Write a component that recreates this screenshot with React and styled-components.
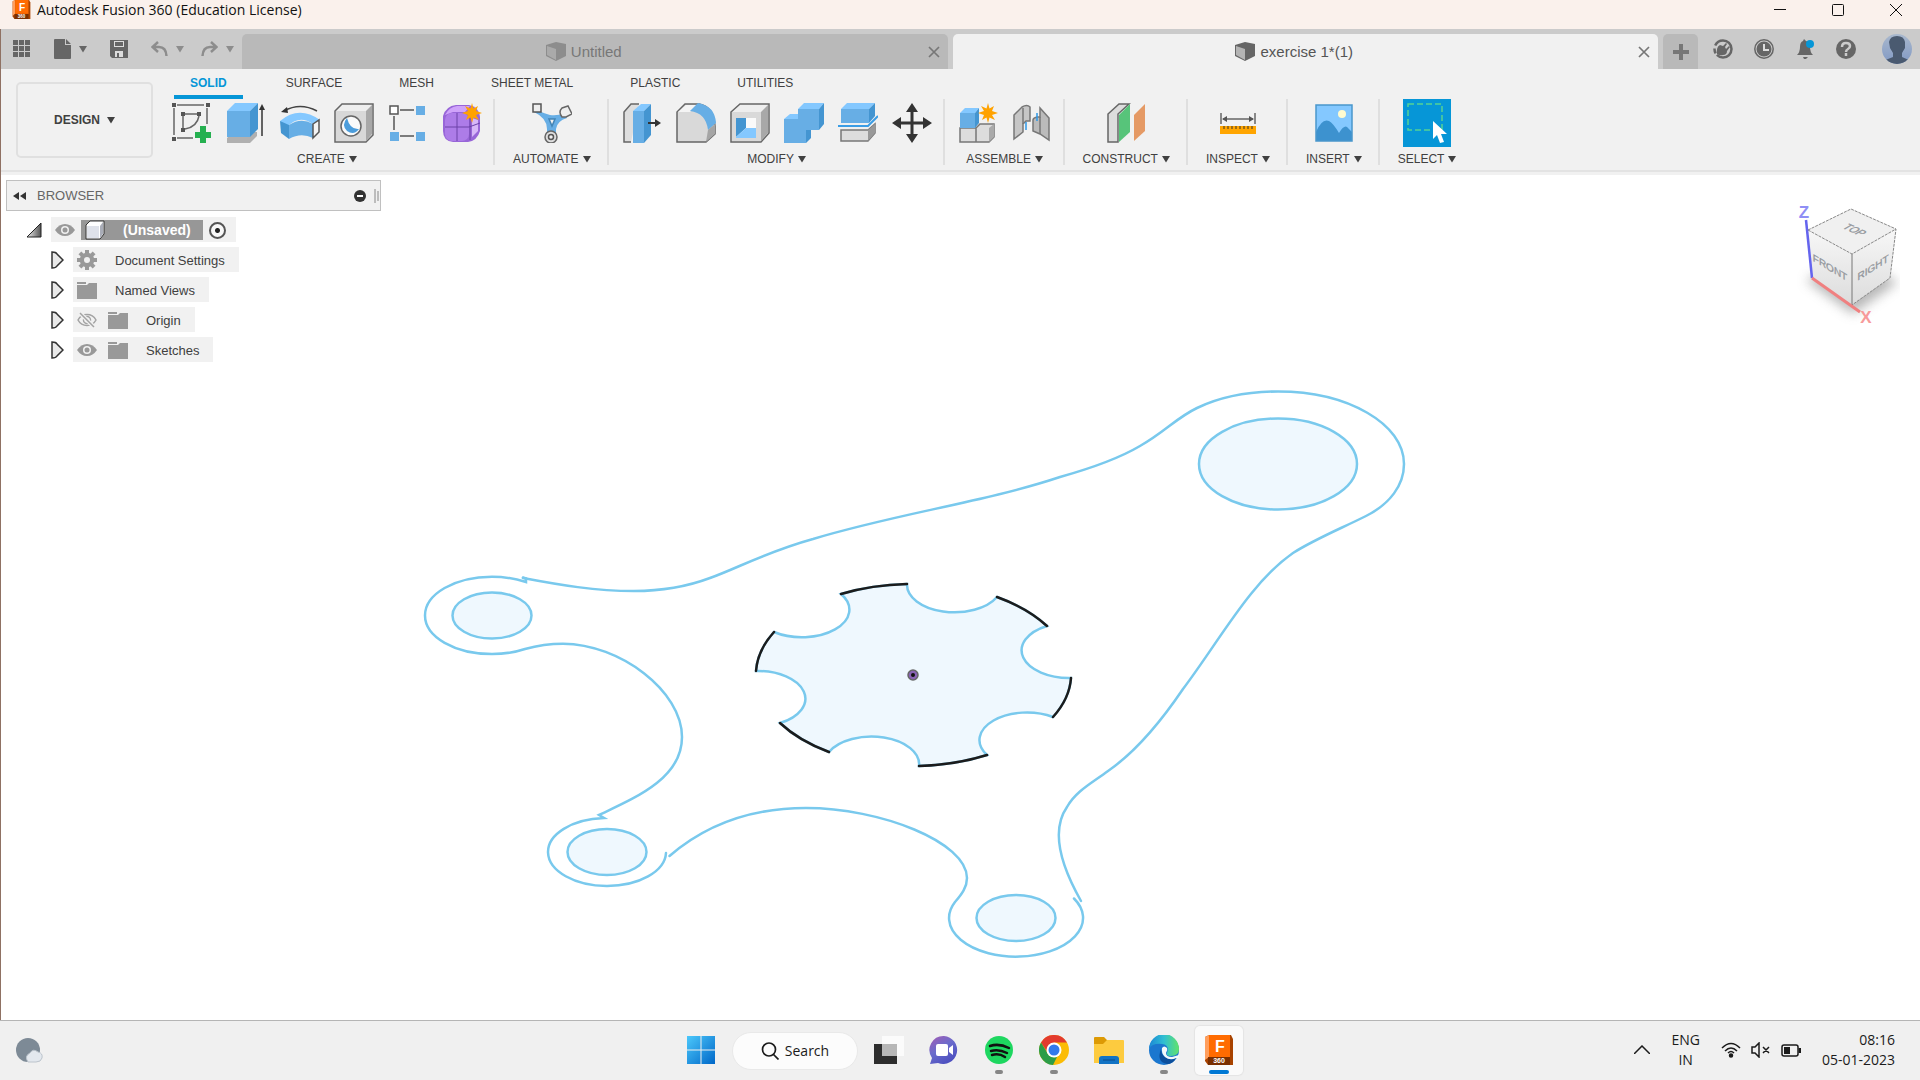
import React from "react";
import styled, { createGlobalStyle } from "styled-components";

const ui = `"Liberation Sans", Arial, sans-serif`;
const system = `"Open Sans", "Noto Sans", sans-serif`;

const GlobalStyle = createGlobalStyle`
  * { box-sizing: border-box; }
  body { margin: 0; background: #fff; font-family: ${ui}; color: #404040; }
  button { border: 0; padding: 0; background: none; font: inherit; color: inherit; cursor: pointer; }
  svg { display: block; flex: none; }
  ul { list-style: none; margin: 0; padding: 0; }
`;

const Shell = styled.div`
  min-height: 100vh;
  display: flex;
  flex-direction: column;
`;

/* ---------- window title bar ---------- */

const TitleBar = styled.header`
  height: 29px;
  display: flex;
  justify-content: space-between;
  align-items: flex-start;
  background: #faf1ec;
  font-family: ${system};
  color: #111;
`;

const AppName = styled.h1`
  margin: 0;
  padding-left: 12px;
  display: flex;
  gap: 6px;
  font-size: 14px;
  line-height: 20px;
  font-weight: 400;
`;

const WindowControls = styled.div`
  display: flex;
  gap: 10px;
`;

const WindowButton = styled.button`
  width: 48px;
  height: 20px;
  display: grid;
  place-items: center;
`;

/* ---------- document bar ---------- */

const Workspace = styled.main`
  flex: 1;
  display: flex;
  flex-direction: column;
  border-left: 1px solid #8f7163;
`;

const DocumentBar = styled.div`
  height: 40px;
  display: flex;
  align-items: stretch;
  background: #cbcbcb;
`;

const QuickTools = styled.div`
  display: flex;
  align-items: center;
  gap: 23px;
  padding: 0 8px 0 12px;
  color: #666;
`;

const HistoryTools = styled.div`
  display: flex;
  gap: 17px;
  color: #8d8d8d;
`;

const QuickButton = styled.button`
  display: flex;
  align-items: center;
  gap: 8px;
`;

const DocumentTabs = styled.div`
  flex: 1;
  display: flex;
  gap: 5px;
  padding-top: 5px;
`;

const DocumentTab = styled.div`
  flex: 1;
  display: flex;
  align-items: center;
  padding-right: 6px;
  border-radius: 5px 5px 0 0;
  background: ${(p) => (p.$active ? "#f1f1f1" : "#b9b9b9")};
  color: ${(p) => (p.$active ? "#555" : "#777")};
`;

const DocumentName = styled.button`
  flex: 1;
  display: flex;
  justify-content: center;
  align-items: center;
  gap: 5px;
  font-size: 15px;
  line-height: 20px;
`;

const CloseButton = styled.button`
  width: 16px;
  height: 16px;
  display: grid;
  place-items: center;
  color: #777;
`;

const NewTab = styled.button`
  width: 35px;
  margin: 5px 0 0 5px;
  display: grid;
  place-items: center;
  border-radius: 5px 5px 0 0;
  background: #b9b9b9;
`;

const AccountTools = styled.div`
  display: flex;
  align-items: center;
  gap: 21px;
  padding: 0 8px 0 15px;
  color: #666;
`;

const Avatar = styled.button`
  margin-left: 5px;
`;

/* ---------- ribbon ---------- */

const Ribbon = styled.div`
  height: 106px;
  display: flex;
  padding: 0 15px;
  background: #f1f1f1;
  border-bottom: 3px solid #f1f1f1;
  box-shadow: inset 0 -2px #e3e3e3;
`;

const DesignButton = styled.button`
  width: 137px;
  height: 76px;
  margin-top: 13px;
  display: flex;
  justify-content: center;
  align-items: center;
  gap: 7px;
  border: 2px solid #e0e0e0;
  border-radius: 5px;
  font-size: 12px;
  font-weight: 700;
`;

const RibbonBody = styled.div`
  flex: 1;
  padding-left: 6px;
`;

const RibbonTabs = styled.div`
  height: 30px;
  display: flex;
  gap: 29px;
  padding-left: 15px;
`;

const RibbonTab = styled.button`
  padding: 1px ${(p) => (p.$active ? 16 : 14)}px 0;
  border-bottom: 4px solid ${(p) => (p.$active ? "#0696d7" : "transparent")};
  color: ${(p) => (p.$active ? "#0696d7" : "#404040")};
  font-size: 12px;
  font-weight: ${(p) => (p.$active ? 700 : 400)};
`;

const ToolGroups = styled.div`
  display: flex;
`;

const ToolGroup = styled.section`
  height: 66px;
  padding: 0 7px 0 9px;
  display: flex;
  flex-direction: column;
  align-items: center;
  border-right: 2px solid ${(p) => (p.$last ? "transparent" : "#dfdfdf")};
`;

const ToolRow = styled.div`
  display: flex;
  gap: 6px;
`;

const ToolButton = styled.button`
  width: 48px;
  height: 48px;
  display: grid;
  place-items: center;
  background: ${(p) => (p.$selected ? "#0696d7" : "none")};
`;

const GroupMenu = styled.button`
  display: flex;
  align-items: center;
  gap: 4px;
  padding: 4px 9px 0;
  font-size: 12px;
  line-height: 16px;
`;

/* ---------- canvas ---------- */

const Canvas = styled.div`
  flex: 1;
  display: grid;
  grid-template-columns: auto 1fr auto;
  background: #fff;
`;

const Sketch = styled.svg`
  grid-area: 1 / 1 / 2 / 4;
  width: 100%;
  height: 100%;
  min-height: 0;
`;

const BrowserPanel = styled.aside`
  grid-area: 1 / 1 / 2 / 2;
  width: 380px;
  padding: 5px 0 0 5px;
`;

const BrowserHeader = styled.div`
  height: 31px;
  display: flex;
  align-items: center;
  gap: 11px;
  padding: 0 1px 0 6px;
  border: 1px solid #c0c0c0;
  background: #f1f1f1;
`;

const BrowserTitle = styled.h2`
  flex: 1;
  margin: 0;
  font-size: 13px;
  font-weight: 400;
  color: #666;
`;

const HeaderTools = styled.div`
  display: flex;
  align-items: center;
  gap: 8px;
`;

const Tree = styled.ul`
  display: flex;
  flex-direction: column;
  gap: 5px;
  padding: 6px 0 0 45px;
`;

const RootNode = styled.li`
  display: flex;
  align-items: center;
  gap: 9px;
  margin-left: -25px;
`;

const TreeNode = styled.li`
  display: flex;
  align-items: center;
  gap: 9px;
`;

const NodeBody = styled.div`
  height: 25px;
  display: flex;
  align-items: center;
  gap: ${(p) => (p.$root ? 6 : 11)}px;
  padding: 1px ${(p) => (p.$root ? 10 : 14)}px 0 4px;
  background: #f1f1f1;
  font-size: 13px;
`;

const NodeLabel = styled.span`
  padding-left: 7px;
`;

const RootLabel = styled.button`
  height: 20px;
  display: flex;
  align-items: center;
  gap: 18px;
  padding: 0 12px 0 4px;
  background: #979797;
  color: #fff;
  font-size: 14px;
  font-weight: 700;
`;

const ActivateRadio = styled.input`
  appearance: none;
  width: 17px;
  height: 17px;
  margin: 0;
  border: 2px solid #555;
  border-radius: 50%;
  background: radial-gradient(circle, #222 2px, #f8f8f8 3px);
`;

const ViewCube = styled.div`
  grid-area: 1 / 3 / 2 / 4;
  padding: 25px 20px 0 0;
`;

/* ---------- taskbar ---------- */

const Taskbar = styled.footer`
  height: 60px;
  display: grid;
  grid-template-columns: 1fr auto 1fr;
  align-items: center;
  border-top: 1px solid #b5b5b5;
  background: #f0f0f0;
  font-family: ${system};
  color: #1b1b1b;
`;

const WeatherButton = styled.button`
  justify-self: start;
  margin-left: 14px;
`;

const TaskItems = styled.nav`
  display: flex;
  align-items: center;
  gap: 7px;
`;

const TaskButton = styled.button`
  width: 48px;
  height: 49px;
  padding-top: 9px;
  display: flex;
  flex-direction: column;
  align-items: center;
  gap: 5px;
  border-radius: 5px;
  background: ${(p) => (p.$active ? "#fafafa" : "none")};
  box-shadow: ${(p) => (p.$active ? "0 0 1px 1px #e4e4e4" : "none")};
`;

const RunningMark = styled.span`
  width: ${(p) => (p.$active ? 20 : 8)}px;
  height: 4px;
  border-radius: 2px;
  background: ${(p) => (p.$active ? "#0078d4" : "#868686")};
`;

const SearchPill = styled.button`
  width: 126px;
  height: 38px;
  display: flex;
  justify-content: center;
  align-items: center;
  gap: 6px;
  border: 1px solid #e9e9e9;
  border-radius: 19px;
  background: #fcfcfc;
  font-size: 14px;
`;

const Tray = styled.div`
  justify-self: end;
  display: flex;
  align-items: center;
  gap: 21px;
  padding: 0 25px 2px 0;
  font-size: 14px;
  line-height: 20px;
`;

const Language = styled.button`
  text-align: center;
`;

const StatusIcons = styled.button`
  display: flex;
  gap: 10px;
`;

const Clock = styled.button`
  text-align: right;
`;

/* ---------- small icons ---------- */

const Caret = () => (
  <svg width="8" height="7" viewBox="0 0 8 7"><path d="M0 0h8L4 6.500z" fill="currentColor" /></svg>
);

const FusionIcon = ({ size }) => (
  <svg width={size} height={size} viewBox="0 0 30 30">
    <path d="M1 2 5 0h22l2 4v26H4l-3-4z" fill="#a84300" />
    <path d="M1 2 5 0v22l-4 3z" fill="#ff9e5c" />
    <path d="M5 0h21v22H5z" fill="#ff6b00" />
    <path d="M4 22h22v8H4z" fill="#7a2f00" />
    <text x="16" y="17" textAnchor="middle" fontFamily="Liberation Sans, sans-serif" fontWeight="700" fontSize="16" fill="#fff">F</text>
    <text x="15" y="28" textAnchor="middle" fontFamily="Liberation Sans, sans-serif" fontWeight="700" fontSize="7" fill="#fff">360</text>
  </svg>
);

const CloseX = () => (
  <svg width="12" height="12" viewBox="0 0 12 12" stroke="currentColor" strokeWidth="1.700"><path d="m1 1 10 10M11 1 1 11" /></svg>
);

const BoxIcon = ({ dim }) => (
  <svg width="20" height="20" viewBox="0 0 20 20">
    <path d="M0 3 10 0l10 2v12l-10 5L0 14z" fill={dim ? "#8d8d8d" : "#666"} />
    <path d="m1 4 9 3v11l-9-5z" fill={dim ? "#aaa" : "#b4b4b4"} />
  </svg>
);

const UndoIcon = ({ flip }) => (
  <svg width="17" height="16" viewBox="0 0 17 16" fill="none" stroke="currentColor" strokeWidth="2.500">
    <g transform={flip ? "matrix(-1 0 0 1 17 0)" : undefined}><path d="M7 1 1.500 6 7 11M2 6h6q7 0 7.500 9" /></g>
  </svg>
);

const EyeIcon = () => (
  <svg width="20" height="14" viewBox="0 0 20 14">
    <path d="M0 7Q4 1 10 1t10 6q-4 6-10 6T0 7z" fill="#999" />
    <circle cx="10" cy="7" r="4" fill="#f1f1f1" /><circle cx="10" cy="7" r="2.500" fill="#999" />
  </svg>
);

const HiddenEyeIcon = () => (
  <svg width="20" height="16" viewBox="0 0 20 16" fill="none" stroke="#a3a3a3" strokeWidth="1.500">
    <path d="M1 8q3-5.500 9-5.500T19 8q-3 5.500-9 5.500T1 8z" /><circle cx="10" cy="8" r="3.500" />
    <path d="m3 1 14 14" stroke="#f1f1f1" strokeWidth="4" /><path d="m3 1 14 14" />
  </svg>
);

const FolderIcon = () => (
  <svg width="20" height="17" viewBox="0 0 20 17" fill="#999"><path d="M0 0h9v2H0zM0 3h10l2-2h8v16H0z" /></svg>
);

const GearIcon = () => (
  <svg width="20" height="20" viewBox="-10 -10 20 20">
    <g fill="#999">
      {[0, 45, 90, 135].map((a) => <rect key={a} x="-2" y="-10" width="4" height="20" transform={`rotate(${a})`} />)}
    </g>
    <circle r="5" fill="none" stroke="#999" strokeWidth="4.500" /><circle r="3" fill="#f1f1f1" />
  </svg>
);

const Expander = () => (
  <svg width="13" height="18" viewBox="0 0 13 18"><path d="M1 1q4 0 5 2l6 6-6 6q-1 2-5 2z" fill="#e9e9e9" stroke="#333" strokeWidth="1.500" /></svg>
);

const RootExpander = () => (
  <svg width="16" height="16" viewBox="0 0 16 16">
    <defs><linearGradient id="wedge"><stop offset="0" stopColor="#eee" /><stop offset="1" stopColor="#555" /></linearGradient></defs>
    <path d="M15 1v14H1z" fill="url(#wedge)" stroke="#222" />
  </svg>
);

const BodyIcon = () => (
  <svg width="20" height="20" viewBox="0 0 20 20" stroke="#333">
    <path d="m1 5 4-4h14v13l-4 5H1z" fill="#fff" /><path d="M2 6h12v12H2z" fill="#dfe2ea" stroke="none" />
    <path d="m15 6 3-4v12l-3 4z" fill="#a9adb8" stroke="none" />
  </svg>
);

/* ---------- ribbon tool icons, drawn on a 40px grid ---------- */

const Tool = ({ children }) => (
  <svg width="40" height="40" viewBox="0 0 40 40" strokeWidth="1.500">{children}</svg>
);

const Burst = ({ x, y }) => (
  <path
    transform={`translate(${x} ${y})`}
    fill="#ffa200"
    d="M0-10 1.500-4.500 6-7 4-2 10 0 4 2 7 7 1.500 4.500 0 10-1.500 4.500-6 7-4 2-10 0-4-2-7-7-1.500-4.500z"
  />
);

const tools = {
  sketch: (
    <Tool>
      <path d="M5 2h27M35 5v16M2 5v27M5 35h16" stroke="#666" />
      <path d="M13 11h12M11 13v12M13 26Q25 24 27 13" fill="none" stroke="#666" />
      <path d="M0 0h4v4H0zM34 0h4v4h-4zM0 34h4v4H0zM9 9h4v4H9zM25 9h4v4h-4zM9 25h4v4H9z" fill="#555" />
      <path d="M28 23h6v6h5v6h-5v5h-6v-5h-5v-6h5z" fill="#25b050" />
    </Tool>
  ),
  extrude: (
    <Tool>
      <path d="m1 35 7-6h23v4l-7 7H1z" fill="#b0b0b0" />
      <path d="m1 8 8-8h23l-8 8z" fill="#84c8ff" /><path d="M1 8h23v26H1z" fill="#67aee5" />
      <path d="m24 8 8-8v26l-8 8z" fill="#4495d1" />
      <path d="M36 33V5" stroke="#333" /><path d="m33 7 3-6 3 6z" fill="#333" />
    </Tool>
  ),
  revolve: (
    <Tool>
      <path d="M0 18Q19 2 40 17l-7 4Q19 11 7 24z" fill="#84c8ff" />
      <path d="M0 18 9 22v14L1 30z" fill="#4495d1" /><path d="M9 22q12-8 24-1v14q-12-6-24 1z" fill="#67aee5" />
      <path d="m33 21 6-4v12l-6 6z" fill="#f4f4f4" stroke="#555" />
      <path d="M4 8Q20-1 37 8" fill="none" stroke="#444" /><path d="m1 9 6-5 1 6z" fill="#333" />
    </Tool>
  ),
  hole: (
    <Tool>
      <path d="m1 8 7-7h31v31l-7 7H1z" fill="#eee" stroke="#666" /><path d="M2 8h30v30H2z" fill="#d8d8d8" />
      <path d="m32 8 6-6v29l-6 7z" fill="#a8a8a8" /><circle cx="17" cy="23" r="10" fill="#fafafa" stroke="#666" />
      <path d="M13 15q-6 7 0 13 7 5 12-2-9 1-12-11z" fill="#4c9ddb" />
    </Tool>
  ),
  pattern: (
    <Tool>
      <path d="M12 7h14M12 33h14M6 13v14" stroke="#555" /><path d="M2 3h8v8H2z" fill="#fff" stroke="#555" />
      <path d="M28 3h9v9h-9zM28 29h9v9h-9zM2 29h9v9H2z" fill="#67aee5" />
    </Tool>
  ),
  form: (
    <Tool>
      <path d="M1 13Q4 3 14 2h13q10 2 11 12v14q-3 10-12 11H11Q1 38 1 28z" fill="#9866d8" />
      <path d="M3 12Q7 4 15 3h13l-5 6H11z" fill="#cfa3fa" />
      <rect x="3" y="10" width="24" height="28" rx="7" fill="#ad7ce8" /><path d="M30 15v19l6-6V17z" fill="#d7b7f8" />
      <path d="M15 10v28M3 24h24l11-4M28 12v25" stroke="#6c42a8" strokeWidth="1" fill="none" /><Burst x="30" y="10" />
    </Tool>
  ),
  automate: (
    <Tool>
      <path d="M4 7q10 4 14 5 8 1 14-2l3 5q-10 3-11 11v7h-9v-7Q15 15 2 9z" fill="#67aee5" />
      <path d="M17 16h6l-3 7z" fill="#f1f1f1" stroke="#4284b5" />
      <path d="M1 1h8v8H1z" fill="#eee" stroke="#555" /><path d="m30 5 6-2 4 8-6 3h-4q-4-5 0-9z" fill="#eee" stroke="#666" />
      <circle cx="19" cy="34" r="6" fill="#ddd" stroke="#666" /><circle cx="19" cy="34" r="2.500" fill="#eee" stroke="#555" />
    </Tool>
  ),
  pressPull: (
    <Tool>
      <path d="M9 39H2V9l7-8h8" fill="#dedede" stroke="#666" />
      <path d="m11 8 8-7h10l-7 7z" fill="#84c8ff" /><path d="M11 8h11v32H11z" fill="#67aee5" />
      <path d="m22 8 7-7v31l-7 8z" fill="#4495d1" /><path d="M26 20h8" stroke="#333" strokeWidth="2" /><path d="m33 16 6 4-6 4z" fill="#333" />
    </Tool>
  ),
  fillet: (
    <Tool>
      <path d="M1 39V9l8-8h14q15 3 16 22v8l-9 8z" fill="#d9d9d9" stroke="#666" /><path d="m2 9 8-7h12l-8 7z" fill="#f4f4f4" />
      <path d="m14 8 8-8q17 3 18 20l-8 7Q30 10 14 8z" fill="#67aee5" /><path d="m32 27 7-6v10l-9 8z" fill="#a5a5a5" />
    </Tool>
  ),
  shell: (
    <Tool>
      <path d="m1 9 9-8h29v29l-8 9H1z" fill="#eee" stroke="#666" /><path d="m31 9 7-7v28l-7 8z" fill="#a8a8a8" />
      <path d="M2 9h29v29H2z" fill="#d9d9d9" /><path d="M6 15h20v20H6z" fill="#fafafa" />
      <path d="M6 15h10v10L6 34z" fill="#4495d1" /><path d="m6 34 10-9h10v10H6z" fill="#84c8ff" />
    </Tool>
  ),
  combine: (
    <Tool>
      <path d="M0 16h14V6h21v21H22v13H0z" fill="#67aee5" /><path d="m0 16 6-5h8v5zM14 6l6-6h20l-5 6z" fill="#84c8ff" />
      <path d="m35 6 5-6v21l-5 6zM22 27h5v8l-5 5z" fill="#4495d1" />
    </Tool>
  ),
  split: (
    <Tool>
      <path d="m3 6 6-6h28l-6 6z" fill="#84c8ff" /><path d="M3 6h28v14H3z" fill="#67aee5" /><path d="m31 6 6-6v13l-6 7z" fill="#4495d1" />
      <path d="M0 23h30l10-10" fill="none" stroke="#3b9de5" strokeWidth="2" />
      <path d="M3 27h27l7-6v9l-7 8H3z" fill="#ddd" stroke="#777" /><path d="m30 27 7-6v9l-7 8z" fill="#999" />
    </Tool>
  ),
  move: (
    <Tool>
      <path d="M20 8v24M8 20h24" stroke="#333" strokeWidth="3" />
      <path d="m14 9 6-9 6 9zM14 31l6 9 6-9zM9 14l-9 6 9 6zM31 14l9 6-9 6z" fill="#333" />
    </Tool>
  ),
  component: (
    <Tool>
      <path d="M2 25h16v14H2zM18 25l4-4h14v13l-5 5H18z" fill="#ddd" stroke="#777" /><path d="m31 25 5-4v13l-5 5z" fill="#aaa" />
      <path d="m2 10 5-5h14l-4 5z" fill="#84c8ff" /><path d="M2 10h15v15H2z" fill="#67aee5" /><path d="m17 10 4-5v15l-4 5z" fill="#4495d1" />
      <Burst x="30" y="10" />
    </Tool>
  ),
  joint: (
    <Tool>
      <path d="m2 12 8-8q5-3 8 0v14h-4l-3 3v8l-9 7z" fill="#c6c6c6" stroke="#777" /><path d="M11 5v16" stroke="#777" />
      <path d="m37 15-9-10v9h-3q-4 1-4 3v11l7 3 9 6z" fill="#bbb" stroke="#777" /><path d="M28 14v17" stroke="#777" />
      <path d="M14 19v8M25 10v8" stroke="#2e98e6" />
    </Tool>
  ),
  construct: (
    <Tool>
      <path d="M2 39V11L13 1h10L12 11v28z" fill="#ddd" stroke="#666" /><path d="m13 12 11-11v28L13 39z" fill="#57c47a" />
      <path d="m28 12 11-11v27L28 38z" fill="#e59a65" />
    </Tool>
  ),
  inspect: (
    <Tool>
      <path d="M3 10v11M37 10v11M5 16h30" stroke="#666" /><path d="m4 16 5-3v6zM36 16l-5-3v6z" fill="#555" />
      <path d="M2 23h36v8H2z" fill="#ffa500" /><path d="M6 23v3M10 23v3M14 23v3M18 23v3M22 23v3M26 23v3M30 23v3M34 23v3" stroke="#7c5a18" />
    </Tool>
  ),
  insert: (
    <Tool>
      <path d="M2 2h36v36H2z" fill="#84c8ff" /><circle cx="28" cy="11" r="4" fill="#fffbd0" />
      <path d="M2 29Q8 15 15 18q4 2 10 12 5-8 8-6l5 5v9H2z" fill="#3d92cf" /><path d="M2 2h36v36H2z" fill="none" stroke="#4a97cc" />
    </Tool>
  ),
  select: (
    <Tool>
      <path d="M1 1h34v26H1z" fill="none" stroke="#55d295" strokeDasharray="6 3" />
      <path d="M26 18v18l4-4 3 8 4-1-3-8h6z" fill="#fff" />
    </Tool>
  ),
};

const groups = [
  { name: "CREATE", items: ["sketch", "extrude", "revolve", "hole", "pattern", "form"] },
  { name: "AUTOMATE", items: ["automate"] },
  { name: "MODIFY", items: ["pressPull", "fillet", "shell", "combine", "split", "move"] },
  { name: "ASSEMBLE", items: ["component", "joint"] },
  { name: "CONSTRUCT", items: ["construct"] },
  { name: "INSPECT", items: ["inspect"] },
  { name: "INSERT", items: ["insert"] },
  { name: "SELECT", items: ["select"] },
];

/* ---------- sketch geometry ---------- */

const holes = [
  [492, 615.5, 39.5, 23],
  [607, 852, 39.5, 23],
  [1016, 918, 39.5, 23],
  [1278, 464, 79, 45.5],
];

const outline = [
  "M523 578C560 585 595 591 634 591C664 591 686 587 710 578C738 568 766 552 813 539C895 514 985 502 1060 477C1092 468 1118 459 1140 446C1165 432 1176 418 1197 408C1220 397 1250 391.500 1278 391.500C1348 391.500 1404 424 1404 464C1404 485 1390 504 1366 516C1340 529 1315 539 1293 553C1250 583 1220 640 1183 689C1162 720 1137 751 1108 771C1092 783 1076 791 1067 807C1051 830 1060 864 1081 901",
  "M523 577.500L526 578.500V582C515 578.500 503 576.700 492 576.700C455 576.700 425 594 425 615.500C425 637 455 654 492 654C504 654 516 652 525 649C541 644.500 553 643.700 563 643.700C620 644 682 691 682 737C682 778 637 797 599 815L604 818A59 34 0 1 0 666 853",
  "M669.500 856C710 821 758 808 806 808C880 808 967 842 967 878C967 887 962 894 955 902A67 38.700 0 1 0 1074 898.500",
];

const notch = "A47.500 27.600 0 0 0";
const rim = "A158 92 0 0 1";

const gearBody = `M841 594${rim} 907 584${notch} 997 597${rim} 1047 626${notch} 1071 678${rim} 1053 717${notch} 987 755${rim} 919 766${notch} 829 752${rim} 780 723${notch} 756 671${rim} 774 632${notch} 841 594z`;

const gearRim = `M841 594${rim} 907 584M997 597${rim} 1047 626M1071 678${rim} 1053 717M987 755${rim} 919 766M829 752${rim} 780 723M756 671${rim} 774 632`;

const SketchDrawing = () => (
  <Sketch viewBox="1 175 1919 845" fill="none" stroke="#79c9ed" strokeWidth="2.500" strokeLinecap="round" role="img" aria-label="Sketch">
    {outline.map((d) => <path key={d} d={d} />)}
    {holes.map(([cx, cy, rx, ry]) => <ellipse key={cx} cx={cx} cy={cy} rx={rx} ry={ry} fill="#eff8fe" />)}
    <path d={gearBody} fill="#eff8fe" />
    <path d={gearRim} stroke="#1c1c1c" />
    <circle cx="913" cy="675" r="5" fill="#8a63b5" stroke="#666" strokeWidth="1.500" />
    <circle cx="913" cy="675" r="2" fill="#111" stroke="none" />
  </Sketch>
);

const CubeDrawing = () => (
  <svg width="110" height="130" viewBox="1790 200 110 130" role="img" aria-label="View orientation">
    <defs>
      <linearGradient id="face" x2="0" y2="1"><stop offset="0" stopColor="#f7f7f7" /><stop offset="1" stopColor="#dcdcdc" /></linearGradient>
      <filter id="soft" x="-40%" y="-60%" width="180%" height="220%"><feGaussianBlur stdDeviation="6" /></filter>
    </defs>
    <path d="M1806 280 1852 258 1898 282 1853 314z" fill="#999" opacity="0.700" filter="url(#soft)" />
    <path d="m1808 230 43-21 45 20-44 25z" fill="#f0f0f0" /><path d="m1808 230 44 24v51l-40-27z" fill="url(#face)" />
    <path d="m1852 254 44-25-6 49-38 27z" fill="url(#face)" />
    <path d="m1808 230 43-21 45 20-6 49-38 27M1808 230l44 24 44-25" fill="none" stroke="#888" strokeDasharray="3 1" />
    <path d="M1852 254v51" stroke="#777" />
    <path d="m1806 220 6 58" stroke="#6464ee" strokeWidth="2.500" /><path d="m1812 278 48 34" stroke="#f08080" strokeWidth="3" />
    <g fontFamily="Liberation Sans, sans-serif" fontSize="10" fill="#92969b" stroke="#92969b" strokeWidth="0.300" textAnchor="middle">
      <text transform="translate(1830 271) skewY(31)">FRONT</text>
      <text transform="translate(1873 271) skewY(-32)">RIGHT</text>
      <text transform="translate(1851 232) rotate(25) skewX(-35)">TOP</text>
    </g>
    <g fontFamily="Liberation Sans, sans-serif" fontSize="17" fontWeight="700" textAnchor="middle">
      <text x="1804" y="218" fill="#8f8ff5">Z</text><text x="1866" y="323" fill="#f79a9a">X</text>
    </g>
  </svg>
);

/* ---------- taskbar icons ---------- */

const Pic = ({ children }) => <svg width="30" height="30" viewBox="0 0 30 30">{children}</svg>;

const taskApps = [
  {
    name: "Task view",
    icon: (<Pic><path d="M0 9h23v20H0z" fill="#2d2d2d" /><path d="M8 1h22v20H8z" fill="#fff" opacity="0.750" /><path d="M8 9h15v12H8z" fill="#aaa" opacity="0.600" /></Pic>),
  },
  {
    name: "Chat",
    icon: (
      <Pic>
        <defs><linearGradient id="chat" x2="0.600" y2="1"><stop offset="0" stopColor="#a55bb3" /><stop offset="0.500" stopColor="#6b6ccc" /><stop offset="1" stopColor="#4d50c0" /></linearGradient></defs>
        <path d="M15 1a14 14 0 1 1-6 27l-8 1 2-6A14 14 0 0 1 15 1z" fill="url(#chat)" />
        <rect x="7" y="9" width="12" height="12" rx="2" fill="#fff" /><path d="m20 13 4-3v10l-4-3z" fill="#fff" />
      </Pic>
    ),
  },
  {
    name: "Spotify",
    running: true,
    icon: (
      <Pic><circle cx="15" cy="15" r="14" fill="#1ed760" />
        <path d="M6 11q9-3 19 2M7 16q8-2 16 2M8 20q7-2 13 2" fill="none" stroke="#111" strokeWidth="2.500" strokeLinecap="round" /></Pic>
    ),
  },
  {
    name: "Chrome",
    running: true,
    icon: (
      <Pic><circle cx="15" cy="15" r="15" fill="#fbbc05" /><path d="M2 7.500A15 15 0 0 1 28 7.500H15L9 18z" fill="#e33b2e" />
        <path d="M2 7.500 9 19q3 4 9 3l-4 8A15 15 0 0 1 2 7.500z" fill="#2d9d48" />
        <circle cx="15" cy="15" r="7.500" fill="#fff" /><circle cx="15" cy="15" r="5.500" fill="#3279ec" /></Pic>
    ),
  },
  {
    name: "File Explorer",
    icon: (
      <Pic><path d="M0 3q0-1 1-1h9l3 3h16v8H0z" fill="#dd9a05" /><path d="M0 9h9l4-4h16q1 0 1 1v22H0z" fill="#fdcb3f" />
        <path d="M5 29v-5q0-3 3-3h14q3 0 3 3v5z" fill="#1273c4" /><path d="M9 25h12" stroke="#0a4b8a" /></Pic>
    ),
  },
  {
    name: "Edge",
    running: true,
    icon: (
      <Pic>
        <defs><linearGradient id="edge"><stop offset="0" stopColor="#1b87d6" /><stop offset="0.500" stopColor="#30bfd2" /><stop offset="1" stopColor="#62e36a" /></linearGradient></defs>
        <circle cx="15" cy="15" r="15" fill="#1b77cf" /><path d="M0 14A15 15 0 0 1 30 14q0 7-8 7-5 0-4-3 3-8-5-9Q3 8 0 14z" fill="url(#edge)" />
        <path d="M12 14q-5 13 6 15 6 0 9-6-6 3-11-1-4-3-4-8z" fill="#0c4f9c" />
        <path d="M13 13q2-3 5 0 1 2-1 5 0 4 6 4l7-2v3l-3 0q-6 3-11-1-4-4-3-9z" fill="#f3f8fa" />
      </Pic>
    ),
  },
  { name: "Fusion 360", running: true, active: true, icon: <FusionIcon size={30} /> },
];

const nodes = [
  { label: "Document Settings", icon: <GearIcon /> },
  { label: "Named Views", icon: <FolderIcon /> },
  { label: "Origin", eye: <HiddenEyeIcon />, icon: <FolderIcon /> },
  { label: "Sketches", eye: <EyeIcon />, icon: <FolderIcon /> },
];

export default function App() {
  return (
    <Shell>
      <GlobalStyle />
      <TitleBar>
        <AppName><FusionIcon size={19} />Autodesk Fusion 360 (Education License)</AppName>
        <WindowControls>
          <WindowButton aria-label="Minimize"><svg width="12" height="12" stroke="#111"><path d="M0 5.500h12" /></svg></WindowButton>
          <WindowButton aria-label="Maximize"><svg width="12" height="12" stroke="#111" fill="none"><rect x=".5" y=".5" width="11" height="11" rx="1" /></svg></WindowButton>
          <WindowButton aria-label="Close"><svg width="12" height="12" stroke="#111"><path d="m0 0 12 12M12 0 0 12" /></svg></WindowButton>
        </WindowControls>
      </TitleBar>

      <Workspace>
        <DocumentBar>
          <QuickTools>
            <QuickButton aria-label="Data panel">
              <svg width="18" height="18" fill="currentColor">
                {[0, 6, 12].flatMap((x) => [0, 6, 12].map((y) => <rect key={`${x}-${y}`} x={x} y={y} width="5" height="5" />))}
              </svg>
            </QuickButton>
            <QuickButton aria-label="File">
              <svg width="17" height="20" fill="currentColor"><path d="M0 1q0-1 1-1h10v6h6v13q0 1-1 1H1q-1 0-1-1zM12 0l5 5h-5z" /></svg>
              <Caret />
            </QuickButton>
            <QuickButton aria-label="Save">
              <svg width="18" height="18" viewBox="0 0 18 18"><path d="M0 0h18v18H2l-2-2z" fill="currentColor" /><path d="M4 1h10v6H4zM5 11h8v6H5z" fill="#ddd" /><path d="M5 2h8v4H5zM7 13h2v4H7z" fill="currentColor" /></svg>
            </QuickButton>
            <HistoryTools>
              <QuickButton aria-label="Undo"><UndoIcon /><Caret /></QuickButton>
              <QuickButton aria-label="Redo"><UndoIcon flip /><Caret /></QuickButton>
            </HistoryTools>
          </QuickTools>
          <DocumentTabs>
            <DocumentTab>
              <DocumentName><BoxIcon dim />Untitled</DocumentName>
              <CloseButton aria-label="Close Untitled"><CloseX /></CloseButton>
            </DocumentTab>
            <DocumentTab $active>
              <DocumentName><BoxIcon />exercise 1*(1)</DocumentName>
              <CloseButton aria-label="Close exercise 1"><CloseX /></CloseButton>
            </DocumentTab>
          </DocumentTabs>
          <NewTab aria-label="New document"><svg width="16" height="16" stroke="#777" strokeWidth="4"><path d="M0 8h16M8 0v16" /></svg></NewTab>
          <AccountTools>
            <QuickButton aria-label="Extensions">
              <svg width="20" height="20" viewBox="0 0 20 20">
                <circle cx="10" cy="10" r="8.500" fill="none" stroke="currentColor" strokeWidth="2.500" strokeDasharray="20 2 5 3 30" />
                <path d="M4 15q-1-7 3-9l3 1 3-3 1 1-2 3 1 2 3-3 1 1-3 4q0 4-4 4-3 1-6-1z" fill="currentColor" />
              </svg>
            </QuickButton>
            <QuickButton aria-label="Job status">
              <svg width="20" height="20" viewBox="0 0 20 20"><circle cx="10" cy="10" r="9.200" fill="none" stroke="currentColor" strokeWidth="1.500" /><circle cx="10" cy="10" r="7.500" fill="currentColor" /><path d="M10 5v6h5" fill="none" stroke="#ddd" strokeWidth="2" /></svg>
            </QuickButton>
            <QuickButton aria-label="Notifications">
              <svg width="20" height="20" viewBox="0 0 20 20"><path d="M2 16q3-3 3-8 0-5 3-6l1-2 2 2q4 1 4 6 0 5 3 8zM8 18h5l-2 2H9z" fill="currentColor" /><circle cx="15" cy="5" r="4" fill="#0696d7" /></svg>
            </QuickButton>
            <QuickButton aria-label="Help">
              <svg width="20" height="20" viewBox="0 0 20 20"><circle cx="10" cy="10" r="10" fill="currentColor" /><path d="M6 8q0-4 4-4t4 3q0 2-2 3t-2 3M10 14v3" fill="none" stroke="#ccc" strokeWidth="2.500" /></svg>
            </QuickButton>
            <Avatar aria-label="Account">
              <svg width="30" height="30" viewBox="0 0 30 30">
                <defs><clipPath id="face-clip"><circle cx="15" cy="15" r="15" /></clipPath><linearGradient id="sky" x2="0" y2="1"><stop offset="0" stopColor="#a9b8cd" /><stop offset="1" stopColor="#8199c4" /></linearGradient></defs>
                <g clipPath="url(#face-clip)"><path d="M0 0h30v30H0z" fill="url(#sky)" /><path d="M7 8q1-6 8-6t8 6v6l-3 5v4l9 4v3H1v-3l10-4v-4l-3-5z" fill="#4a5a70" /></g>
              </svg>
            </Avatar>
          </AccountTools>
        </DocumentBar>

        <Ribbon>
          <DesignButton>DESIGN <Caret /></DesignButton>
          <RibbonBody>
            <RibbonTabs role="tablist">
              {["SOLID", "SURFACE", "MESH", "SHEET METAL", "PLASTIC", "UTILITIES"].map((t, i) => (
                <RibbonTab key={t} role="tab" aria-selected={i === 0} $active={i === 0}>{t}</RibbonTab>
              ))}
            </RibbonTabs>
            <ToolGroups>
              {groups.map((g, i) => (
                <ToolGroup key={g.name} $last={i === groups.length - 1}>
                  <ToolRow>
                    {g.items.map((t) => <ToolButton key={t} aria-label={t} $selected={t === "select"}>{tools[t]}</ToolButton>)}
                  </ToolRow>
                  <GroupMenu>{g.name}<Caret /></GroupMenu>
                </ToolGroup>
              ))}
            </ToolGroups>
          </RibbonBody>
        </Ribbon>

        <Canvas>
          <SketchDrawing />
          <BrowserPanel>
            <BrowserHeader>
              <svg width="13" height="8" fill="#333"><path d="M6 0v8L0 4zM13 0v8L7 4z" /></svg>
              <BrowserTitle>BROWSER</BrowserTitle>
              <HeaderTools>
                <svg width="12" height="12"><circle cx="6" cy="6" r="6" fill="#333" /><path d="M3 6h6" stroke="#fff" strokeWidth="2" /></svg>
                <svg width="5" height="14" stroke="#888"><path d="M1 0v14M4 2v10" /></svg>
              </HeaderTools>
            </BrowserHeader>
            <Tree>
              <RootNode>
                <RootExpander />
                <NodeBody $root>
                  <EyeIcon />
                  <RootLabel><BodyIcon />(Unsaved)</RootLabel>
                  <ActivateRadio type="radio" name="component" aria-label="Activate (Unsaved)" defaultChecked />
                </NodeBody>
              </RootNode>
              {nodes.map((n) => (
                <TreeNode key={n.label}>
                  <Expander />
                  <NodeBody>{n.eye}{n.icon}<NodeLabel>{n.label}</NodeLabel></NodeBody>
                </TreeNode>
              ))}
            </Tree>
          </BrowserPanel>
          <ViewCube><CubeDrawing /></ViewCube>
        </Canvas>
      </Workspace>

      <Taskbar>
        <WeatherButton aria-label="Weather">
          <svg width="30" height="30" viewBox="0 0 30 30"><circle cx="14" cy="14" r="12" fill="#7d8a96" /><path d="M14 26q-4-6 2-9 3-5 8-1 5 1 4 6-1 4-6 4z" fill="#e3e8ee" stroke="#bcc4cc" /></svg>
        </WeatherButton>
        <TaskItems>
          <TaskButton aria-label="Start">
            <Pic>
              <defs><linearGradient id="win" x2="1" y2="1"><stop offset="0" stopColor="#4cc8fb" /><stop offset="1" stopColor="#0067c8" /></linearGradient></defs>
              <path d="M1 1h13.500v13.500H1zM15.500 1H29v13.500H15.500zM1 15.500h13.500V29H1zM15.500 15.500H29V29H15.500z" fill="url(#win)" />
            </Pic>
          </TaskButton>
          <SearchPill>
            <svg width="18" height="18" viewBox="0 0 18 18" fill="none" stroke="#1b1b1b" strokeWidth="1.700"><circle cx="8" cy="7.500" r="6.500" /><path d="m12.500 12.500 5 5" /></svg>
            Search
          </SearchPill>
          {taskApps.map((a) => (
            <TaskButton key={a.name} aria-label={a.name} $active={a.active}>
              {a.icon}
              {a.running && <RunningMark $active={a.active} />}
            </TaskButton>
          ))}
        </TaskItems>
        <Tray>
          <StatusIcons aria-label="Show hidden icons"><svg width="16" height="9" fill="none" stroke="#1b1b1b" strokeWidth="1.500"><path d="m0 9 8-8 8 8" /></svg></StatusIcons>
          <Language>ENG<br />IN</Language>
          <StatusIcons aria-label="Network, volume, battery">
            <svg width="20" height="16" viewBox="0 0 20 16" fill="none" stroke="#1b1b1b" strokeWidth="1.500"><path d="M1 6q9-9 18 0M4 9q6-6 12 0M7 11q3-3 6 0" /><circle cx="10" cy="13.500" r="1.500" fill="#1b1b1b" /></svg>
            <svg width="20" height="16" viewBox="0 0 20 16" fill="none" stroke="#1b1b1b" strokeWidth="1.500"><path d="M1 5h3l4-4v14l-4-4H1zM12 5l6 6M18 5l-6 6" /></svg>
            <svg width="20" height="16" viewBox="0 0 20 16" fill="none" stroke="#1b1b1b" strokeWidth="1.500"><rect x="1" y="3" width="16" height="11" rx="2" /><path d="M3 5h6v7H3z" fill="#1b1b1b" stroke="none" /><path d="M19 6v5" strokeWidth="3" /></svg>
          </StatusIcons>
          <Clock>08:16<br />05-01-2023</Clock>
        </Tray>
      </Taskbar>
    </Shell>
  );
}
